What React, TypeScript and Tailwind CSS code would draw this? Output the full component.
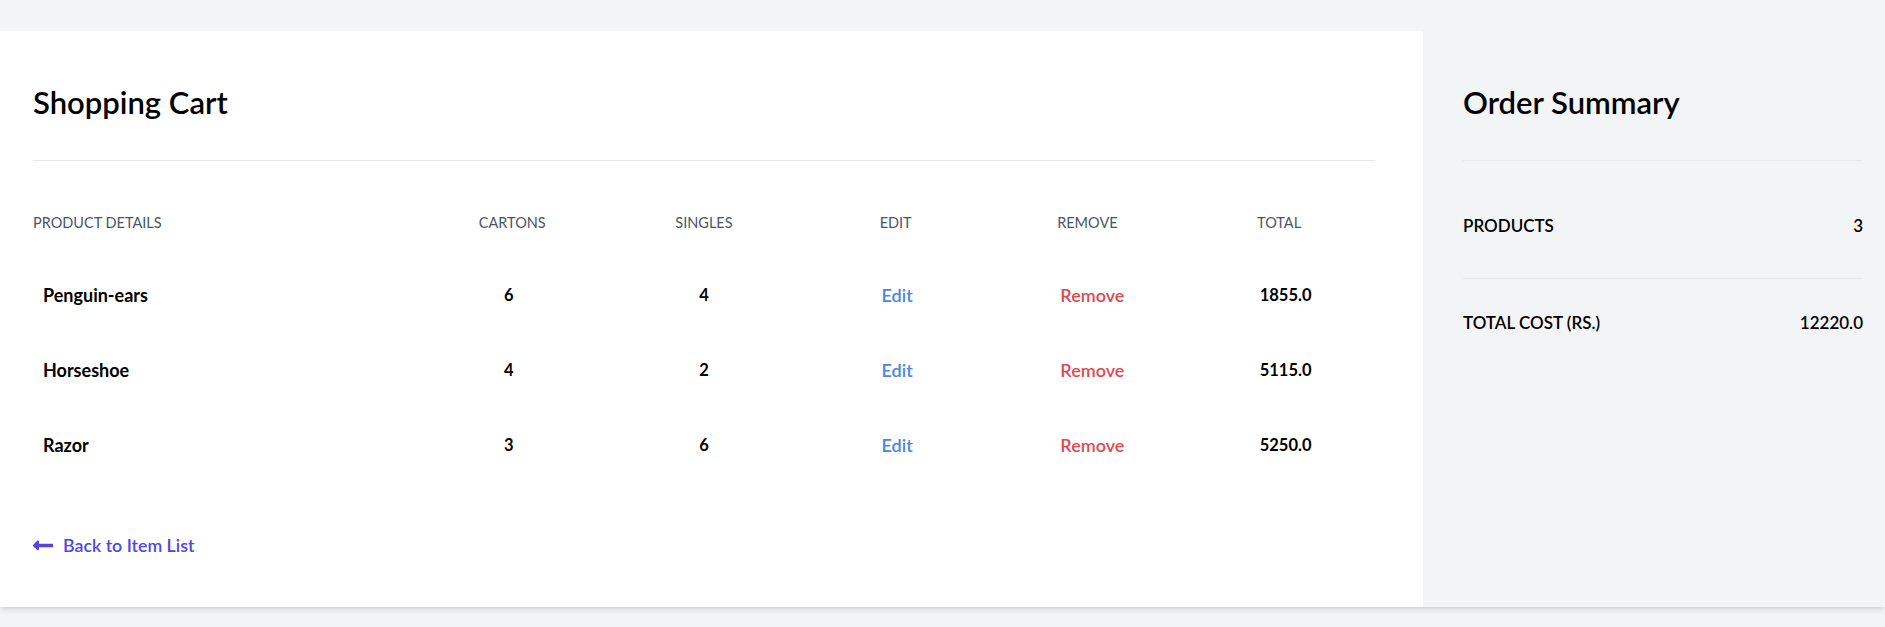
import React from 'react';

const items = [
  { name: 'Penguin-ears', cartons: 6, singles: 4, total: '1855.0' },
  { name: 'Horseshoe', cartons: 4, singles: 2, total: '5115.0' },
  { name: 'Razor', cartons: 3, singles: 6, total: '5250.0' },
];

const font = { fontFamily: 'Lato, "Noto Sans", sans-serif' };

export default function App() {
  return (
    <div className="min-h-screen bg-[#f3f4f6] pt-[31px] text-black" style={font}>
      <div className="flex h-[576px] shadow-md">
        {/* cart */}
        <div className="w-[1423px] shrink-0 bg-white pl-[33px] pr-[48px] pt-[53px]">
          <div className="flex justify-between border-b border-[#e5e7eb] pb-[40px]">
            <h1 className="text-[31px] leading-[36px] font-semibold">Shopping Cart</h1>
          </div>

          <div className="mt-[47px] flex h-[30px] items-center text-[14.5px] text-[#4b5563] uppercase">
            <div className="w-2/7">Product Details</div>
            <div className="w-1/7 text-center">Cartons</div>
            <div className="w-1/7 text-center">Singles</div>
            <div className="w-1/7 text-center">Edit</div>
            <div className="w-1/7 text-center">Remove</div>
            <div className="w-1/7 text-center">Total</div>
          </div>

          <div className="mt-[20px]">
            {items.map(item => (
              <div key={item.name} className="flex h-[75px] items-center text-[16.5px] font-bold">
                <div className="w-2/7 pl-[10px] text-[18px]">{item.name}</div>
                <div className="w-1/7 pr-[7px] text-center">{item.cartons}</div>
                <div className="w-1/7 text-center">{item.singles}</div>
                <div className="w-1/7 text-center text-[18px]">
                  <a href="#" className="pl-[3px] font-semibold text-[#4a86e0]">Edit</a>
                </div>
                <div className="w-1/7 text-center text-[18px]">
                  <a href="#" className="pl-[10px] font-semibold text-[#e0484f]">Remove</a>
                </div>
                <div className="w-1/7 pl-[13px] text-center">{item.total}</div>
              </div>
            ))}
          </div>

          <a href="#" className="mt-[50px] flex h-[24px] items-center text-[17.8px] font-semibold text-[#4f46e5]">
            <svg className="mr-[10px] w-[20px] fill-current" viewBox="0 0 448 512">
              <path d="M134.059 296H436c6.627 0 12-5.373 12-12v-56c0-6.627-5.373-12-12-12H134.059v-46.059c0-21.382-25.851-32.09-40.971-16.971L7.029 239.029c-9.373 9.373-9.373 24.569 0 33.941l86.059 86.059c15.119 15.119 40.971 4.411 40.971-16.971V296z" />
            </svg>
            Back to Item List
          </a>
        </div>

        {/* summary */}
        <div className="flex-1 bg-[#f3f4f6] pl-[40px] pr-[22px] pt-[53px]">
          <h1 className="border-b border-[#e5e7eb] pb-[40px] text-[31px] leading-[36px] font-semibold">
            Order Summary
          </h1>
          <div className="flex h-[118px] items-center justify-between border-b border-[#e5e7eb] pt-[13px] text-[17px] font-semibold uppercase">
            <span>Products</span>
            <span>3</span>
          </div>
          <div className="mt-[32px] flex h-[24px] items-center justify-between text-[17px] font-semibold uppercase">
            <span>Total cost (Rs.)</span>
            <span>12220.0</span>
          </div>
        </div>
      </div>
    </div>
  );
}
